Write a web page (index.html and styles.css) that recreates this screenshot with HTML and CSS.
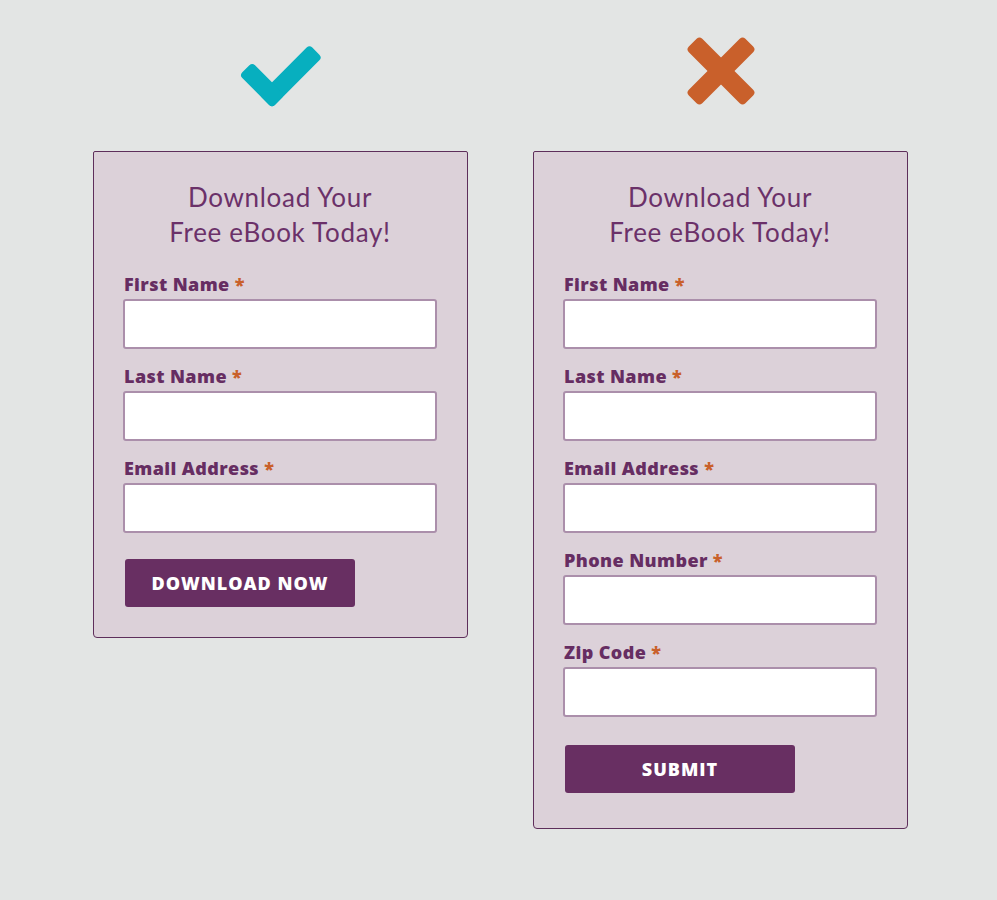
FILE: index.html
```html
<!DOCTYPE html>
<html lang="en">
<head>
<meta charset="utf-8">
<title>Forms</title>
<link rel="stylesheet" href="styles.css">
</head>
<body>
<div class="page">
  <div class="column">
    <div class="mark">
      <svg class="mark-icon mark-icon--check" width="100" height="80" viewBox="0 0 100 80" aria-hidden="true">
        <g fill="#07afbf">
          <rect x="-9" y="-9" width="71" height="18" rx="4" transform="translate(41 60) rotate(-45)"/>
          <rect x="-9" y="-9" width="46" height="18" rx="4" transform="translate(41 60) rotate(-135)"/>
        </g>
      </svg>
    </div>
    <form class="card">
      <h2 class="card-title">Download Your<br>Free eBook Today!</h2>
      <div class="field">
        <label class="field-label">First Name <span class="req">*</span></label>
        <input class="field-input" type="text">
      </div>
      <div class="field">
        <label class="field-label">Last Name <span class="req">*</span></label>
        <input class="field-input" type="text">
      </div>
      <div class="field">
        <label class="field-label">Email Address <span class="req">*</span></label>
        <input class="field-input" type="text">
      </div>
      <button class="btn" type="button">DOWNLOAD NOW</button>
    </form>
  </div>
  <div class="column">
    <div class="mark">
      <svg class="mark-icon mark-icon--cross" width="80" height="80" viewBox="0 0 80 80" aria-hidden="true">
        <g fill="#c9602b">
          <rect x="-40" y="-9.5" width="80" height="19" rx="4" transform="translate(40 40) rotate(45)"/>
          <rect x="-40" y="-9.5" width="80" height="19" rx="4" transform="translate(40 40) rotate(-45)"/>
        </g>
      </svg>
    </div>
    <form class="card card--long">
      <h2 class="card-title">Download Your<br>Free eBook Today!</h2>
      <div class="field">
        <label class="field-label">First Name <span class="req">*</span></label>
        <input class="field-input" type="text">
      </div>
      <div class="field">
        <label class="field-label">Last Name <span class="req">*</span></label>
        <input class="field-input" type="text">
      </div>
      <div class="field">
        <label class="field-label">Email Address <span class="req">*</span></label>
        <input class="field-input" type="text">
      </div>
      <div class="field">
        <label class="field-label">Phone Number <span class="req">*</span></label>
        <input class="field-input" type="text">
      </div>
      <div class="field">
        <label class="field-label">Zip Code <span class="req">*</span></label>
        <input class="field-input" type="text">
      </div>
      <button class="btn" type="button">SUBMIT</button>
    </form>
  </div>
</div>
</body>
</html>
```
FILE: styles.css
```css
* { box-sizing: border-box; }
html, body {
  margin: 0;
  background: #e3e5e4;
}
body {
  width: 997px;
  height: 900px;
  font-family: "Open Sans", "Lato", sans-serif;
}
.page {
  display: flex;
  gap: 65px;
  padding-left: 93px;
}
.column {
  width: 375px;
  display: flex;
  flex-direction: column;
}
.mark {
  height: 151px;
  display: flex;
  justify-content: center;
  align-items: flex-start;
}
.mark-icon--check { margin-top: 35px; }
.mark-icon--cross { margin-top: 31px; }
.card {
  margin: 0;
  background: #dcd1d9;
  border: 1px solid #5e2e5b;
  border-radius: 2px 2px 4px 4px;
  padding: 28px 30px 30px 29px;
}
.card-title {
  margin: 0 0 23px;
  text-align: center;
  font-family: "Lato", "Open Sans", sans-serif;
  font-size: 26px;
  line-height: 35px;
  font-weight: 400;
  letter-spacing: 0.7px;
  color: #6b3169;
}
.field {
  display: flex;
  flex-direction: column;
  margin-bottom: 16px;
}
.field-label {
  font-size: 18px;
  line-height: 22px;
  font-weight: 800;
  letter-spacing: 0.4px;
  color: #662d62;
  margin-bottom: 4px;
  padding-left: 1px;
}
.req { color: #c9602b; }
.field-input {
  display: block;
  width: 100%;
  height: 50px;
  margin: 0;
  background: #fff;
  border: 2px solid #ab8fab;
  border-radius: 3px;
}
.btn {
  display: block;
  margin: 26px 0 0 2px;
  width: 230px;
  height: 48px;
  border: 0;
  border-radius: 3px;
  background: #682f62;
  color: #fff;
  font-family: inherit;
  font-size: 18px;
  font-weight: 800;
  letter-spacing: 1px;
}
.card--long { padding-bottom: 35px; }
.card--long .btn { margin-top: 28px; }
```
